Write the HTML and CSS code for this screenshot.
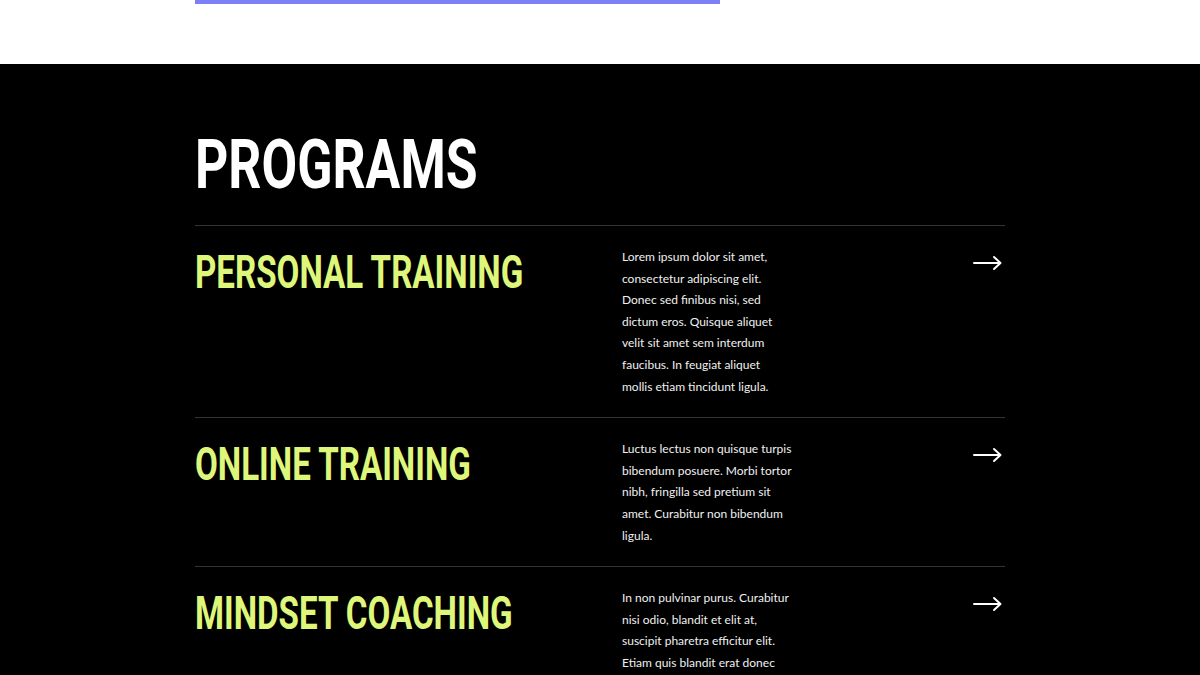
FILE: index.html
```html
<!DOCTYPE html>
<html lang="en">
<head>
<meta charset="utf-8">
<title>Programs</title>
<link rel="stylesheet" href="styles.css">
</head>
<body>
<header class="top">
  <div class="top-inner">
    <div class="accent-bar"></div>
  </div>
</header>
<section class="programs">
  <div class="container">
    <h1 class="title"><span class="cond">PROGRAMS</span></h1>
    <div class="list">
      <article class="row">
        <h2 class="row-title"><span class="cond">PERSONAL TRAINING</span></h2>
        <p class="row-text">Lorem ipsum dolor sit amet, consectetur adipiscing elit. Donec sed finibus nisi, sed dictum eros. Quisque aliquet velit sit amet sem interdum faucibus. In feugiat aliquet mollis etiam tincidunt ligula.</p>
        <a class="row-link" href="#" aria-label="Personal training">
          <svg width="30" height="16" viewBox="0 0 30 16" fill="none" stroke="currentColor" stroke-width="2" stroke-linecap="round" stroke-linejoin="round"><path d="M1 8H27"/><path d="M21 2L27.5 8L21 14"/></svg>
        </a>
      </article>
      <article class="row">
        <h2 class="row-title"><span class="cond">ONLINE TRAINING</span></h2>
        <p class="row-text">Luctus lectus non quisque turpis bibendum posuere. Morbi tortor nibh, fringilla sed pretium sit amet. Curabitur non bibendum ligula.</p>
        <a class="row-link" href="#" aria-label="Online training">
          <svg width="30" height="16" viewBox="0 0 30 16" fill="none" stroke="currentColor" stroke-width="2" stroke-linecap="round" stroke-linejoin="round"><path d="M1 8H27"/><path d="M21 2L27.5 8L21 14"/></svg>
        </a>
      </article>
      <article class="row">
        <h2 class="row-title"><span class="cond">MINDSET COACHING</span></h2>
        <p class="row-text">In non pulvinar purus. Curabitur nisi odio, blandit et elit at, suscipit pharetra efficitur elit. Etiam quis blandit erat donec vitae lectus ac nunc porta luctus.</p>
        <a class="row-link" href="#" aria-label="Mindset coaching">
          <svg width="30" height="16" viewBox="0 0 30 16" fill="none" stroke="currentColor" stroke-width="2" stroke-linecap="round" stroke-linejoin="round"><path d="M1 8H27"/><path d="M21 2L27.5 8L21 14"/></svg>
        </a>
      </article>
    </div>
  </div>
</section>
</body>
</html>
```

FILE: styles.css
```css
* { box-sizing: border-box; }
html, body { margin: 0; padding: 0; }
body {
  background: #000;
  font-family: Lato, "Open Sans", sans-serif;
}
.top {
  background: #fff;
  height: 64px;
}
.top-inner {
  width: 810px;
  margin: 0 auto;
}
.accent-bar {
  width: 525px;
  height: 4px;
  background: #7c80f4;
}
.programs {
  background: #000;
  padding-top: 49px;
}
.container {
  width: 810px;
  margin: 0 auto;
}
.cond {
  display: inline-block;
  font-family: Roboto, "Liberation Sans", sans-serif;
  font-weight: 700;
  transform-origin: left center;
  white-space: nowrap;
}
.title {
  margin: 0 0 11px;
  color: #fff;
  font-size: 69px;
  line-height: 98px;
  font-weight: 700;
}
.title .cond { transform: scaleX(0.75); }
.list { border-bottom: 1px solid #333; }
.row {
  display: grid;
  grid-template-columns: 405px 171px 1fr;
  column-gap: 22px;
  align-items: start;
  border-top: 1px solid #333;
  padding: 20px 0 20px;
}
.row-title {
  margin: 0;
  color: #def67a;
  font-size: 46px;
  line-height: 50px;
  font-weight: 700;
}
.row-title .cond { transform: scaleX(0.72); }
.row-text {
  margin: 0;
  color: #f0f0f0;
  font-size: 12px;
  line-height: 21.6px;
}
.row-link {
  justify-self: end;
  margin-top: 9px;
  margin-right: 2px;
  color: #fff;
  display: block;
  line-height: 0;
}
```
